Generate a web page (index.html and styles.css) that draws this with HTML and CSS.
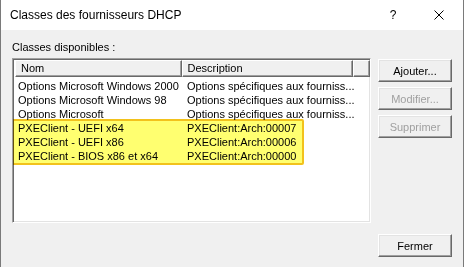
FILE: index.html
```html
<!DOCTYPE html>
<html lang="fr">
<head>
  <meta charset="UTF-8">
  <title>Classes des fournisseurs DHCP</title>
  <link rel="stylesheet" href="styles.css">
</head>
<body>
  <div class="dialog">
    <div class="titlebar">
      <span class="title">Classes des fournisseurs DHCP</span>
      <span class="tb-btn help">?</span>
      <span class="tb-btn close">
        <svg width="10" height="10" viewBox="0 0 10 10">
          <path d="M0.5 0.5 L9.5 9.5 M9.5 0.5 L0.5 9.5" stroke="#000" stroke-width="1" fill="none"/>
        </svg>
      </span>
    </div>
    <div class="content">
      <div class="label">Classes disponibles :</div>
      <div class="listbox">
        <div class="header">
          <div class="hcell col-name">Nom</div>
          <div class="hcell col-desc">Description</div>
          <div class="hcell col-rest"></div>
        </div>
        <div class="rows">
          <div class="row"><span class="cell col-name">Options Microsoft Windows 2000</span><span class="cell col-desc">Options spécifiques aux fourniss...</span></div>
          <div class="row"><span class="cell col-name">Options Microsoft Windows 98</span><span class="cell col-desc">Options spécifiques aux fourniss...</span></div>
          <div class="row"><span class="cell col-name">Options Microsoft</span><span class="cell col-desc">Options spécifiques aux fourniss...</span></div>
          <div class="row"><span class="cell col-name">PXEClient - UEFI x64</span><span class="cell col-desc">PXEClient:Arch:00007</span></div>
          <div class="row"><span class="cell col-name">PXEClient - UEFI x86</span><span class="cell col-desc">PXEClient:Arch:00006</span></div>
          <div class="row"><span class="cell col-name">PXEClient - BIOS x86 et x64</span><span class="cell col-desc">PXEClient:Arch:00000</span></div>
          <div class="marker"></div>
        </div>
      </div>
      <div class="actions">
        <button class="btn">Ajouter...</button>
        <button class="btn" disabled>Modifier...</button>
        <button class="btn" disabled>Supprimer</button>
      </div>
      <div class="footer">
        <button class="btn">Fermer</button>
      </div>
    </div>
  </div>
</body>
</html>
```

FILE: styles.css
```css
body {
  margin: 0;
  font-family: "Liberation Sans", Arial, sans-serif;
  font-size: 11px;
  color: #000;
  background: #f0f0f0;
}
.dialog {
  width: 464px;
  height: 267px;
  box-sizing: border-box;
  border-left: 1px solid #7a7a7a;
  border-right: 1px solid #7a7a7a;
  background: #f0f0f0;
  display: flex;
  flex-direction: column;
}
.titlebar {
  height: 30px;
  background: #fff;
  display: flex;
  align-items: center;
  flex-shrink: 0;
}
.title {
  font-size: 12px;
  padding-left: 9px;
  flex: 1;
}
.tb-btn {
  width: 46px;
  height: 30px;
  display: flex;
  align-items: center;
  justify-content: center;
}
.help {
  font-size: 12px;
}
.close {
  margin-right: 1px;
}
.content {
  display: grid;
  grid-template-columns: 359px 74px;
  grid-template-rows: auto 165px auto;
  column-gap: 7px;
  padding: 11px 0 0 11px;
}
.label {
  grid-column: 1 / 3;
  line-height: 13px;
  height: 13px;
  margin-bottom: 4px;
}
.listbox {
  background: #fff;
  border: 1px solid;
  border-color: #a0a0a0 #fff #fff #a0a0a0;
  box-shadow: inset 1px 1px 0 #696969, inset -1px -1px 0 #e3e3e3;
  padding: 1px 0 0 2px;
  overflow: hidden;
}
.header {
  display: flex;
  height: 17px;
}
.hcell {
  box-sizing: border-box;
  background: #f0f0f0;
  border: 1px solid;
  border-color: #fff #696969 #696969 #fff;
  box-shadow: inset -1px -1px 0 #a0a0a0;
  line-height: 14px;
  padding-left: 5px;
}
.header .col-name { width: 167px; }
.header .col-desc { width: 172px; }
.header .col-rest { width: 17px; }
.rows {
  position: relative;
  padding-top: 2px;
}
.row {
  display: flex;
  height: 14px;
  line-height: 14px;
  white-space: nowrap;
}
.cell.col-name {
  width: 164px;
  padding-left: 3px;
}
.cell.col-desc {
  padding-left: 5px;
}
.marker {
  position: absolute;
  left: -3px;
  top: 42px;
  width: 292px;
  height: 46px;
  box-sizing: border-box;
  border: 2px solid #f2c21c;
  border-radius: 2px;
  background: rgb(255, 255, 112);
  mix-blend-mode: multiply;
}
.actions {
  display: flex;
  flex-direction: column;
  gap: 5px;
  margin-top: 1px;
}
.btn {
  width: 74px;
  height: 23px;
  box-sizing: border-box;
  padding: 0;
  font-family: "Liberation Sans", Arial, sans-serif;
  font-size: 11px;
  color: #000;
  background: #f0f0f0;
  border: 1px solid;
  border-color: #fff #696969 #696969 #fff;
  box-shadow: inset -1px -1px 0 #a0a0a0, inset 1px 1px 0 #e3e3e3;
}
.btn:disabled {
  color: #a0a0a0;
}
.footer {
  grid-column: 2;
  margin-top: 11px;
}
```
